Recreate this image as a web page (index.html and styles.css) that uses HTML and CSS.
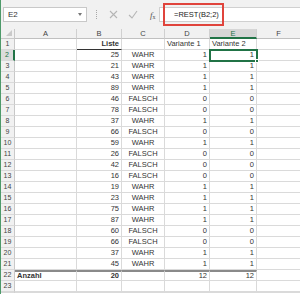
FILE: index.html
```html
<!DOCTYPE html>
<html>
<head>
<meta charset="utf-8">
<link rel="stylesheet" href="styles.css">
</head>
<body>
<div class="app">
  <div class="toolbar">
    <div class="namebox"><span>E2</span><span class="arrow"></span></div>
    <div class="sep"></div>
    <div class="icons">
      <svg class="ic" width="9" height="9" viewBox="0 0 9 9"><path d="M1 1L8 8M8 1L1 8" stroke="#b5b5b5" stroke-width="1.1" fill="none"/></svg>
      <svg class="ic" width="10" height="9" viewBox="0 0 10 9"><path d="M1 5L4 8L9 1" stroke="#b5b5b5" stroke-width="1.1" fill="none"/></svg>
      <span class="fx"><i>f</i><sub>x</sub></span>
    </div>
    <div class="formula"><span class="ftext">=REST(B2;2)</span></div>
    <div class="redbox"></div>
  </div>
  <div class="grid">
    <div class="corner"><span class="tri"></span></div>
    <div class="ch">A</div><div class="ch">B</div><div class="ch">C</div><div class="ch">D</div><div class="ch sel">E</div><div class="ch">F</div>

    <div class="rh">1</div><div class="c"></div><div class="c r b bb">Liste</div><div class="c"></div><div class="c">Variante 1</div><div class="c">Variante 2</div><div class="c"></div>
    <div class="rh sel">2</div><div class="c"></div><div class="c r">25</div><div class="c m">WAHR</div><div class="c r">1</div><div class="c r active">1<span class="handle"></span></div><div class="c"></div>
    <div class="rh">3</div><div class="c"></div><div class="c r">21</div><div class="c m">WAHR</div><div class="c r">1</div><div class="c r">1</div><div class="c"></div>
    <div class="rh">4</div><div class="c"></div><div class="c r">43</div><div class="c m">WAHR</div><div class="c r">1</div><div class="c r">1</div><div class="c"></div>
    <div class="rh">5</div><div class="c"></div><div class="c r">89</div><div class="c m">WAHR</div><div class="c r">1</div><div class="c r">1</div><div class="c"></div>
    <div class="rh">6</div><div class="c"></div><div class="c r">46</div><div class="c m">FALSCH</div><div class="c r">0</div><div class="c r">0</div><div class="c"></div>
    <div class="rh">7</div><div class="c"></div><div class="c r">78</div><div class="c m">FALSCH</div><div class="c r">0</div><div class="c r">0</div><div class="c"></div>
    <div class="rh">8</div><div class="c"></div><div class="c r">37</div><div class="c m">WAHR</div><div class="c r">1</div><div class="c r">1</div><div class="c"></div>
    <div class="rh">9</div><div class="c"></div><div class="c r">66</div><div class="c m">FALSCH</div><div class="c r">0</div><div class="c r">0</div><div class="c"></div>
    <div class="rh">10</div><div class="c"></div><div class="c r">59</div><div class="c m">WAHR</div><div class="c r">1</div><div class="c r">1</div><div class="c"></div>
    <div class="rh">11</div><div class="c"></div><div class="c r">26</div><div class="c m">FALSCH</div><div class="c r">0</div><div class="c r">0</div><div class="c"></div>
    <div class="rh">12</div><div class="c"></div><div class="c r">42</div><div class="c m">FALSCH</div><div class="c r">0</div><div class="c r">0</div><div class="c"></div>
    <div class="rh">13</div><div class="c"></div><div class="c r">16</div><div class="c m">FALSCH</div><div class="c r">0</div><div class="c r">0</div><div class="c"></div>
    <div class="rh">14</div><div class="c"></div><div class="c r">19</div><div class="c m">WAHR</div><div class="c r">1</div><div class="c r">1</div><div class="c"></div>
    <div class="rh">15</div><div class="c"></div><div class="c r">23</div><div class="c m">WAHR</div><div class="c r">1</div><div class="c r">1</div><div class="c"></div>
    <div class="rh">16</div><div class="c"></div><div class="c r">75</div><div class="c m">WAHR</div><div class="c r">1</div><div class="c r">1</div><div class="c"></div>
    <div class="rh">17</div><div class="c"></div><div class="c r">87</div><div class="c m">WAHR</div><div class="c r">1</div><div class="c r">1</div><div class="c"></div>
    <div class="rh">18</div><div class="c"></div><div class="c r">60</div><div class="c m">FALSCH</div><div class="c r">0</div><div class="c r">0</div><div class="c"></div>
    <div class="rh">19</div><div class="c"></div><div class="c r">66</div><div class="c m">FALSCH</div><div class="c r">0</div><div class="c r">0</div><div class="c"></div>
    <div class="rh">20</div><div class="c"></div><div class="c r">37</div><div class="c m">WAHR</div><div class="c r">1</div><div class="c r">1</div><div class="c"></div>
    <div class="rh">21</div><div class="c"></div><div class="c r">45</div><div class="c m">WAHR</div><div class="c r">1</div><div class="c r">1</div><div class="c"></div>
    <div class="rh">22</div><div class="c b tt">Anzahl</div><div class="c r b tt">20</div><div class="c tt"></div><div class="c r tt">12</div><div class="c r tt">12</div><div class="c"></div>
    <div class="rh">23</div><div class="c"></div><div class="c"></div><div class="c"></div><div class="c"></div><div class="c"></div><div class="c"></div>
    <div class="rh"></div><div class="c"></div><div class="c"></div><div class="c"></div><div class="c"></div><div class="c"></div><div class="c"></div>
  </div>
</div>
</body>
</html>
```

FILE: styles.css
```css
* { box-sizing: border-box; }
html, body { margin: 0; padding: 0; background: #fff; }
body { width: 300px; height: 294px; overflow: hidden; font-family: "Liberation Sans", Arial, sans-serif; font-size: 7.5px; color: #333; }
.app { border-left: 1px solid #4e9a6a; height: 294px; overflow: hidden; }
.toolbar { position: relative; height: 29px; background: #f1f1f1; display: flex; align-items: center; padding-left: 2px; }
.namebox { width: 84px; height: 15px; background: #fff; border: 1px solid #c8c8c8; display: flex; align-items: center; justify-content: space-between; padding: 0 4px 0 4px; font-size: 8px; color: #333; }
.arrow { width: 0; height: 0; border-left: 2.5px solid transparent; border-right: 2.5px solid transparent; border-top: 3px solid #777; }
.sep { width: 1px; height: 9px; margin-left: 9px; border-left: 1px dotted #a8a8a8; }
.icons { display: flex; align-items: center; width: 62px; padding-left: 12px; gap: 10px; }
.ic { display: block; }
.fx { font-family: "Liberation Serif", serif; font-size: 9px; color: #555; margin-left: 2px; }
.fx sub { font-size: 6px; vertical-align: -1px; }
.formula { flex: 1; height: 15px; background: #fff; border: 1px solid #d0d0d0; border-right: none; display: flex; align-items: center; padding-left: 14px; }
.ftext { font-size: 7.5px; color: #222; }
.redbox { position: absolute; left: 162px; top: 3px; width: 61px; height: 23px; border: 2px solid #e0443c; }
.grid { display: grid; grid-template-columns: 14px 62px 45px 43px 45px 47px 44px; grid-template-rows: 10px repeat(23, 11px); }
.corner { background: #f1f1f1; border-right: 1px solid #c8c8c8; border-bottom: 1px solid #c8c8c8; position: relative; }
.tri { position: absolute; right: 2px; bottom: 2px; width: 0; height: 0; border-left: 6px solid transparent; border-bottom: 6px solid #c9c9c9; }
.ch { background: #f1f1f1; border-right: 1px solid #d0d0d0; border-bottom: 1px solid #c0c0c0; text-align: center; line-height: 9px; color: #444; font-size: 7.5px; }
.ch.sel { background: #d6d6d6; color: #217346; border-bottom: 2px solid #217346; }
.rh { background: #f1f1f1; border-right: 1px solid #c8c8c8; border-bottom: 1px solid #dadada; text-align: center; line-height: 10px; color: #444; font-size: 7px; }
.rh.sel { background: #dcdcdc; color: #217346; border-right: 2px solid #217346; }
.c { border-right: 1px solid #dadada; border-bottom: 1px solid #dadada; line-height: 10px; padding: 0 2px; white-space: nowrap; overflow: hidden; position: relative; }
.c.r { text-align: right; }
.c.m { text-align: center; }
.c.b { font-weight: bold; }
.c.bb { border-bottom: 1px solid #333; }
.c.tt { border-top: 2px solid #8a8a8a; line-height: 8px; }
.c.active { outline: 2px solid #217346; outline-offset: -1px; overflow: visible; z-index: 2; }
.handle { position: absolute; right: -3px; bottom: -3px; width: 4px; height: 4px; background: #217346; border: 1px solid #fff; }
```
